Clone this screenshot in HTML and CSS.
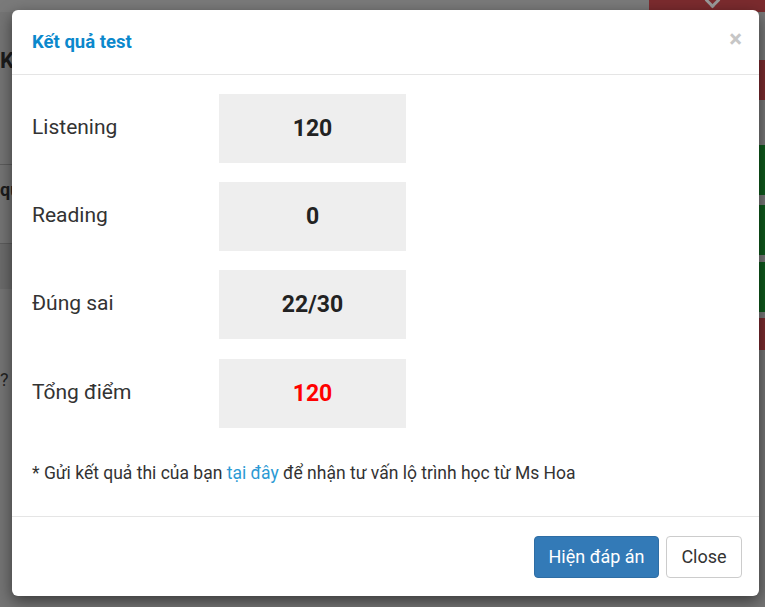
FILE: index.html
```html
<!DOCTYPE html>
<html lang="vi">
<head>
<meta charset="utf-8">
<title>Kết quả test</title>
<link rel="stylesheet" href="styles.css">
</head>
<body>
<div class="page">
  <div class="topbar"><div class="topbar-fill"></div><div class="topbar-red"><span class="chev"></span></div></div>
  <div class="page-main">
    <div class="page-left">
      <div class="pl-k">K</div>
      <div class="pl-qu">qu</div>
      <div class="pl-band"></div>
      <div class="pl-q">?</div>
    </div>
    <div class="page-right">
      <div class="pr gray h60"></div>
      <div class="pr red h40"></div>
      <div class="pr gray h45"></div>
      <div class="pr green h50"></div>
      <div class="pr gray h10"></div>
      <div class="pr green h50"></div>
      <div class="pr gray h7"></div>
      <div class="pr green h50"></div>
      <div class="pr gray h6"></div>
      <div class="pr red h32"></div>
    </div>
  </div>
</div>

<div class="modal">
  <div class="modal-header">
    <h4 class="modal-title">Kết quả test</h4>
    <span class="modal-close">×</span>
  </div>
  <div class="modal-body">
    <div class="row">
      <div class="label">Listening</div>
      <div class="value">120</div>
    </div>
    <div class="row">
      <div class="label">Reading</div>
      <div class="value">0</div>
    </div>
    <div class="row">
      <div class="label">Đúng sai</div>
      <div class="value">22/30</div>
    </div>
    <div class="row">
      <div class="label">Tổng điểm</div>
      <div class="value total">120</div>
    </div>
    <p class="note">* Gửi kết quả thi của bạn <a class="link" href="#">tại đây</a> để nhận tư vấn lộ trình học từ Ms Hoa</p>
  </div>
  <div class="modal-footer">
    <button class="btn btn-primary">Hiện đáp án</button>
    <button class="btn btn-default">Close</button>
  </div>
</div>
</body>
</html>
```

FILE: styles.css
```css
html, body {
  margin: 0;
  padding: 0;
}
body {
  width: 765px;
  height: 607px;
  overflow: hidden;
  background: #747474;
  font-family: Roboto, "Liberation Sans", sans-serif;
  position: relative;
}
.page {
  display: flex;
  flex-direction: column;
  height: 607px;
}
.topbar {
  display: flex;
  height: 12px;
}
.topbar-fill {
  flex: 1;
  background: #7a7a7a;
}
.topbar-red {
  width: 116px;
  background: #7b2b2e;
  display: flex;
  justify-content: center;
}
.chev {
  width: 8px;
  height: 8px;
  margin-top: -5px;
  margin-left: 10px;
  border-right: 3px solid #9a9a9a;
  border-bottom: 3px solid #9a9a9a;
  transform: rotate(45deg);
}
.page-main {
  flex: 1;
  display: flex;
  justify-content: space-between;
}
.page-left {
  width: 14px;
  display: flex;
  flex-direction: column;
  color: #1c1c1c;
  font-weight: 700;
  font-size: 22px;
}
.pl-k {
  margin-top: 36px;
  height: 116px;
  border-bottom: 1px solid #5c5c5c;
}
.pl-qu {
  height: 78px;
  font-size: 18px;
  line-height: 50px;
  border-bottom: 1px solid #5c5c5c;
}
.pl-band {
  height: 45px;
  background: #6b6b6b;
}
.pl-q {
  margin-top: 80px;
  font-weight: 400;
  font-size: 18px;
  color: #222;
}
.page-right {
  width: 6px;
  display: flex;
  flex-direction: column;
}
.pr.gray { background: #777; }
.pr.red { background: #7a2a2e; }
.pr.green { background: #0f5a1c; }
.h60 { height: 48px; }
.h40 { height: 40px; }
.h45 { height: 45px; }
.h50 { height: 50px; }
.h10 { height: 10px; }
.h7 { height: 7px; }
.h6 { height: 6px; }
.h32 { height: 32px; }

.modal {
  position: absolute;
  left: 12px;
  top: 10px;
  width: 747px;
  height: 586px;
  background: #fff;
  border-radius: 6px;
  box-shadow: 0 5px 15px rgba(0, 0, 0, 0.5);
  display: flex;
  flex-direction: column;
  box-sizing: border-box;
}
.modal-header {
  height: 65px;
  box-sizing: border-box;
  border-bottom: 1px solid #e5e5e5;
  display: flex;
  align-items: center;
  justify-content: space-between;
  padding: 0 17px 0 20px;
}
.modal-title {
  margin: 0;
  font-size: 18.5px;
  font-weight: 700;
  color: #0b88cc;
  line-height: 1;
}
.modal-close {
  font-size: 24px;
  font-weight: 700;
  color: #c6c6c6;
  line-height: 1;
  margin-top: -6px;
}
.modal-body {
  flex: 1;
  padding: 19px 20px 0 20px;
  display: flex;
  flex-direction: column;
  gap: 19.2px;
  border-bottom: 1px solid #e5e5e5;
}
.row {
  display: flex;
  align-items: center;
}
.label {
  width: 187px;
  font-size: 21px;
  color: #333;
  padding-bottom: 3px;
}
.value {
  width: 187px;
  height: 69px;
  background: #eeeeee;
  display: flex;
  align-items: center;
  justify-content: center;
  font-size: 23px;
  font-weight: 700;
  color: #222;
}
.value.total {
  color: #ff0000;
}
.note {
  margin: 15px 0 0 0;
  font-size: 17.5px;
  color: #333;
  line-height: 22px;
}
.link {
  color: #2b9ad4;
  text-decoration: none;
}
.modal-footer {
  height: 79px;
  display: flex;
  justify-content: flex-end;
  align-items: center;
  gap: 7px;
  padding: 0 17px 0 0;
}
.btn {
  height: 42px;
  box-sizing: border-box;
  border-radius: 4px;
  font-family: Roboto, "Liberation Sans", sans-serif;
  font-size: 18px;
  padding: 0;
  cursor: pointer;
}
.btn-primary {
  width: 125px;
  background: #337ab7;
  border: 1px solid #2e6da4;
  color: #fff;
}
.btn-default {
  width: 76px;
  background: #fff;
  border: 1px solid #ccc;
  color: #333;
}
```
